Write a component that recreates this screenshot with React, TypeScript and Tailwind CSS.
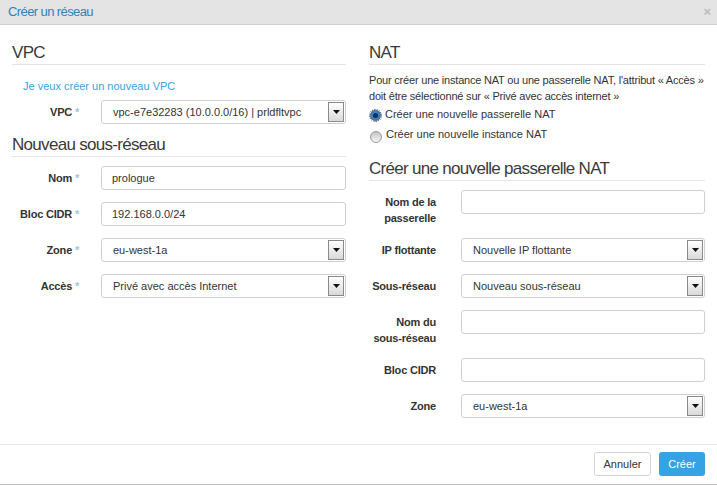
import type { ReactNode } from 'react';

const font = "font-['Liberation_Sans',Arial,sans-serif]";

function Star() {
  return <span className="text-[#9fc6dc]"> *</span>;
}

function Arrow() {
  return (
    <div className="absolute right-[1px] top-[1px] bottom-[1px] w-[16px] border border-[#8a8a8a] bg-gradient-to-b from-white to-[#d9d9d9] flex items-center justify-center">
      <svg width="7" height="4" viewBox="0 0 7 4">
        <path d="M0 0h7L3.5 4z" fill="#111" />
      </svg>
    </div>
  );
}

function Select({ value }: { value: string }) {
  return (
    <div className="relative h-[24px] w-[245px] rounded-[3px] border border-[#cfcfcf] bg-white pl-[11px] text-[11px] leading-[22px] text-[#333]">
      {value}
      <Arrow />
    </div>
  );
}

function Input({ value = '' }: { value?: string }) {
  return (
    <div className="h-[24px] w-[245px] rounded-[3px] border border-[#cfcfcf] bg-white pl-[10px] text-[11px] leading-[22px] text-[#333]">
      {value}
    </div>
  );
}

function Row({ label, gap, children }: { label: ReactNode; gap: string; children: ReactNode }) {
  return (
    <div className="flex">
      <div className={`w-[67px] shrink-0 pt-[4px] text-right text-[11px] font-bold leading-[16px] tracking-[-0.2px] text-[#333] ${gap}`}>
        {label}
      </div>
      {children}
    </div>
  );
}

function Heading({ children }: { children: ReactNode }) {
  return (
    <div className="border-b border-[#e5e5e5] pb-[1px] text-[17px] leading-[20px] tracking-[-0.7px] text-[#3a3a3a]">
      {children}
    </div>
  );
}

function Radio({ checked, label }: { checked?: boolean; label: string }) {
  return (
    <div className="flex h-[20px] items-center gap-[4px] text-[11px] text-[#333]">
      {checked ? (
        <div className="ml-[1px] flex h-[11px] w-[11px] items-center justify-center rounded-full border border-[#4a6b8a] bg-[#3b7fc4] outline outline-1 outline-dotted outline-[#333] outline-offset-[0px]">
          <div className="h-[5px] w-[5px] rounded-full bg-[#0b2f55]" />
        </div>
      ) : (
        <div className="ml-[1px] mt-[4px] h-[12px] w-[12px] rounded-full border border-[#9a9a9a] bg-gradient-to-b from-[#c8c8c8] to-[#f4f4f4]" />
      )}
      <span className="-mt-[2px]">{label}</span>
    </div>
  );
}

export default function App() {
  return (
    <div className={`${font} flex h-[485px] w-[717px] flex-col bg-white`}>
      <div className="flex h-[25px] shrink-0 items-center justify-between border-b border-[#cfcfcf] bg-[#e4e4e4] pl-[8px] pr-[6px]">
        <span className="text-[13px] tracking-[-0.6px] text-[#2f82bd]">Créer un réseau</span>
        <span className="text-[13px] font-bold text-[#bbbbbb]">×</span>
      </div>

      <div className="flex flex-1 gap-[23px] pl-[12px] pt-[18px]">
        <div className="w-[334px]">
          <Heading>VPC</Heading>
          <div className="mt-[14px] pl-[11px] text-[11px] leading-[15px] text-[#3aa3dc]">Je veux créer un nouveau VPC</div>
          <div className="mt-[6px]">
            <Row label={<>VPC<Star /></>} gap="mr-[22px]">
              <Select value="vpc-e7e32283 (10.0.0.0/16) | prldfltvpc" />
            </Row>
          </div>
          <div className="mt-[11px]">
            <Heading>Nouveau sous-réseau</Heading>
          </div>
          <div className="mt-[9px] flex flex-col gap-[12px]">
            <Row label={<>Nom<Star /></>} gap="mr-[22px]">
              <Input value="prologue" />
            </Row>
            <Row label={<>Bloc CIDR<Star /></>} gap="mr-[22px]">
              <Input value="192.168.0.0/24" />
            </Row>
            <Row label={<>Zone<Star /></>} gap="mr-[22px]">
              <Select value="eu-west-1a" />
            </Row>
            <Row label={<>Accès<Star /></>} gap="mr-[22px]">
              <Select value="Privé avec accès Internet" />
            </Row>
          </div>
        </div>

        <div className="w-[336px]">
          <Heading>NAT</Heading>
          <p className="mt-[7px] text-[11px] leading-[16px] tracking-[-0.2px] text-[#333]">
            Pour créer une instance NAT ou une passerelle NAT, l'attribut « Accès » doit être sélectionné sur « Privé avec accès internet »
          </p>
          <div className="mt-[1px]">
            <Radio checked label="Créer une nouvelle passerelle NAT" />
            <Radio label="Créer une nouvelle instance NAT" />
          </div>
          <div className="mt-[14px]">
            <Heading>Créer une nouvelle passerelle NAT</Heading>
          </div>
          <div className="mt-[9px] flex flex-col gap-[12px]">
            <div className="h-[36px]">
              <Row label={<>Nom de la<br />passerelle</>} gap="mr-[25px]">
                <Input />
              </Row>
            </div>
            <Row label="IP flottante" gap="mr-[25px]">
              <Select value="Nouvelle IP flottante" />
            </Row>
            <Row label="Sous-réseau" gap="mr-[25px]">
              <Select value="Nouveau sous-réseau" />
            </Row>
            <div className="h-[36px]">
              <Row label={<>Nom du<br />sous-réseau</>} gap="mr-[25px]">
                <Input />
              </Row>
            </div>
            <Row label="Bloc CIDR" gap="mr-[25px]">
              <Input />
            </Row>
            <Row label="Zone" gap="mr-[25px]">
              <Select value="eu-west-1a" />
            </Row>
          </div>
        </div>
      </div>

      <div className="flex h-[41px] shrink-0 items-start justify-end gap-[8px] border-y border-t-[#e5e5e5] border-b-[#bdbdbd] pr-[12px] pt-[7px]">
        <button className="h-[24px] w-[57px] rounded-[3px] border border-[#d4d4d4] bg-white text-[11px] text-[#333]">
          Annuler
        </button>
        <button className="h-[24px] w-[46px] rounded-[3px] bg-[#33a3e3] text-[11px] text-white">Créer</button>
      </div>
    </div>
  );
}
